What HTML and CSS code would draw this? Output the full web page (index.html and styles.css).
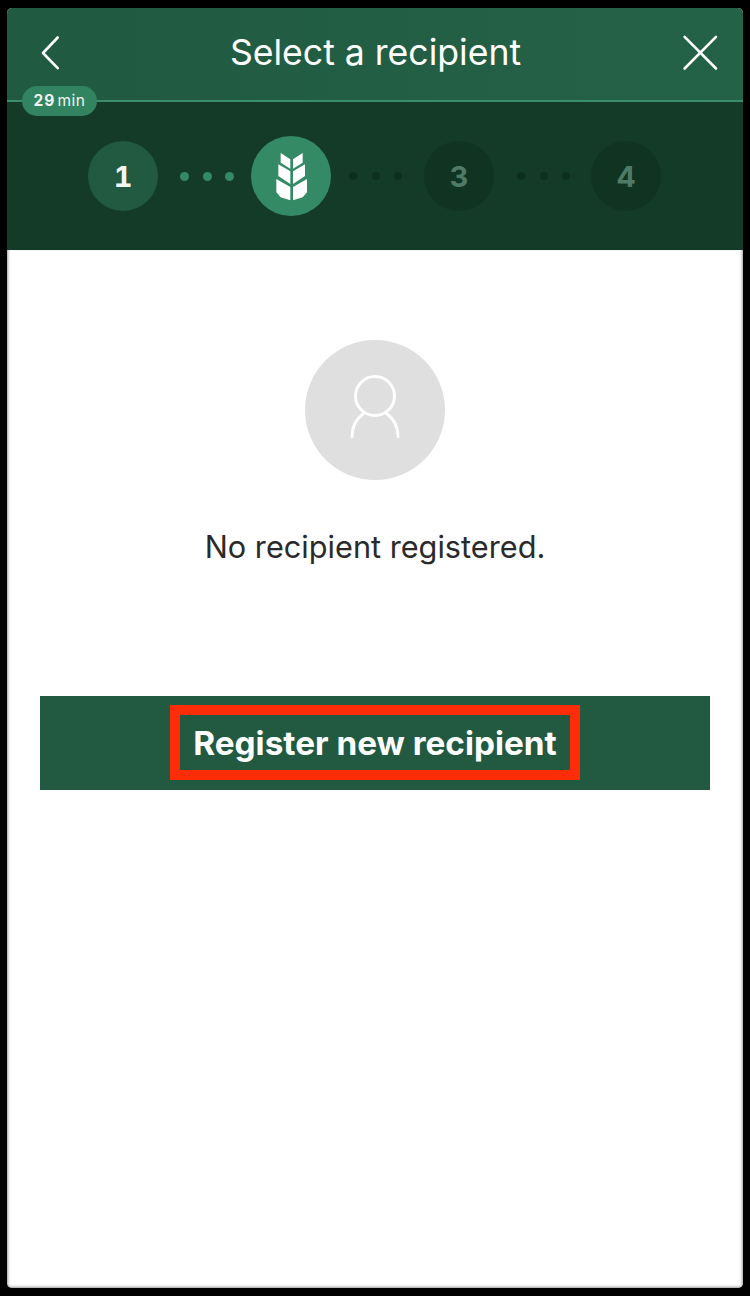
FILE: index.html
```html
<!DOCTYPE html>
<html lang="en">
<head>
<meta charset="utf-8">
<title>Select a recipient</title>
<link rel="stylesheet" href="styles.css">
</head>
<body>
<main class="screen">
  <header class="topbar">
    <button class="icon-btn" aria-label="Back">
      <svg width="44" height="44" viewBox="0 0 44 44"><path class="line" d="M28.700 6.500 14 22 28.700 37.200"/></svg>
    </button>
    <h1 class="title">Select a recipient</h1>
    <button class="icon-btn" aria-label="Close">
      <svg width="44" height="44" viewBox="0 0 44 44"><path class="line" d="M6.600 5.800 38 37.500M38 5.800 6.600 37.500"/></svg>
    </button>
  </header>
  <section class="progress">
    <div class="timer"><b>29</b><span>min</span></div>
    <div class="steps">
      <div class="step step-done">1</div>
      <div class="dots dots-done"><i></i><i></i><i></i></div>
      <div class="step step-current">
        <svg width="33" height="50" viewBox="133 78 99 150">
          <path d="M150 84 179 103V131L150 113ZM216 84 187 103V131L216 113ZM143 118 179 139V177L143 153ZM223 118 187 139V177L223 153ZM137 162 179 186V226L150 217 137 202ZM229 162 187 186V226L216 217 229 202Z"/>
        </svg>
      </div>
      <div class="dots dots-mid"><i></i><i></i><i></i></div>
      <div class="step step-todo">3</div>
      <div class="dots dots-wide"><i></i><i></i><i></i></div>
      <div class="step step-todo">4</div>
    </div>
  </section>
  <section class="content">
    <div class="avatar">
      <svg width="60" height="72" viewBox="0 -6 60 72">
        <circle cx="30" cy="16" r="19.500"/>
        <path d="M7 56.500C7 46 11 39 18.500 33.500M53 56.500C53 46 49 39 41.500 33.500"/>
      </svg>
    </div>
    <p class="empty">No recipient registered.</p>
    <div class="cta">
      <span class="cta-mark">Register new recipient</span>
    </div>
  </section>
</main>
</body>
</html>
```
FILE: styles.css
```css
* { box-sizing: border-box; }
html, body { margin: 0; height: 100%; }
body {
  background: #000;
  padding: 8px 7px;
  font-family: Inter, "Liberation Sans", sans-serif;
}
.screen {
  width: 736px;
  height: 1280px;
  background: #fff;
  border-radius: 5px;
  overflow: hidden;
  display: flex;
  flex-direction: column;
}
.topbar {
  height: 92px;
  flex: none;
  display: flex;
  align-items: center;
  justify-content: space-between;
  padding: 0 21px 0 22px;
  background: linear-gradient(90deg, #205a40, #246247);
  color: #fff;
}
.icon-btn {
  width: 44px;
  height: 44px;
  padding: 0;
  margin-top: -3px;
  border: 0;
  background: none;
}
.icon-btn svg { display: block; }
.line {
  fill: none;
  stroke: #fff;
  stroke-width: 2.600;
  stroke-linecap: round;
  stroke-linejoin: round;
}
.title {
  margin: -3px 0 0;
  font-size: 35.600px;
  font-weight: 400;
  line-height: 44px;
}
.progress {
  position: relative;
  height: 150px;
  flex: none;
  background: #143b28;
  border-top: 2px solid #3b8c68;
}
.timer {
  position: absolute;
  left: 15px;
  top: -16px;
  width: 75px;
  height: 30px;
  display: flex;
  align-items: center;
  justify-content: center;
  gap: 2px;
  border-radius: 15px;
  background: #32835f;
  color: #eef5f1;
  font-size: 15.500px;
  line-height: 1;
}
.timer b { font-weight: 700; letter-spacing: 1px; }
.timer span { font-weight: 400; letter-spacing: 0.5px; }
.steps {
  height: 148px;
  padding: 0 0 0 81px;
  display: flex;
  align-items: center;
}
.step {
  width: 70px;
  height: 70px;
  flex: none;
  border-radius: 50%;
  display: flex;
  align-items: center;
  justify-content: center;
  font-size: 29px;
  font-weight: 700;
  font-feature-settings: "tnum";
}
.step-done { background: #215a40; color: #f2f6f4; }
.step-current { width: 80px; height: 80px; background: #348a64; }
.step-current svg { fill: #fff; display: block; }
.step-todo { background: #103322; color: #4f7a66; }
.dots {
  width: 53px;
  flex: none;
  display: flex;
  justify-content: space-between;
  align-items: center;
}
.dots-done { width: 54px; margin: 0 17px 0 22px; }
.dots-mid { margin: 0 22px 0 18px; }
.dots-wide { margin: 0 21px 0 23px; }
.dots i {
  width: 8px;
  height: 8px;
  border-radius: 50%;
  background: #0e2f1f;
}
.dots-done i { width: 9px; height: 9px; background: #348a64; }
.content {
  flex: 1;
  padding: 90px 33px 0;
  display: flex;
  flex-direction: column;
  align-items: center;
  box-shadow: inset 3px 0 3px -2px #999, inset -3px 0 3px -2px #999, inset 0 -3px 3px -2px #999;
}
.avatar {
  width: 140px;
  height: 140px;
  border-radius: 50%;
  background: #dfdfdf;
  display: flex;
  align-items: center;
  justify-content: center;
}
.avatar svg {
  fill: none;
  stroke: #fff;
  stroke-width: 3;
  stroke-linecap: round;
}
.empty {
  margin: 47px 0 0;
  font-size: 30.700px;
  line-height: 40px;
  color: #2a2a2a;
}
.cta {
  width: 670px;
  height: 94px;
  margin-top: 129px;
  background: #215a40;
  display: flex;
  align-items: center;
  justify-content: center;
  padding-bottom: 1px;
}
.cta-mark {
  width: 410px;
  height: 75px;
  border: 10px solid #ff2d07;
  display: flex;
  align-items: center;
  justify-content: center;
  color: #fff;
  font-size: 33.300px;
  font-weight: 700;
  white-space: nowrap;
}
```
